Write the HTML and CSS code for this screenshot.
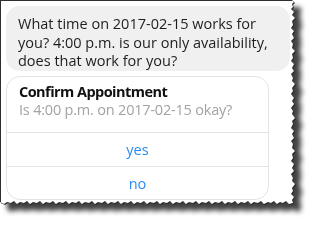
FILE: index.html
```html
<!DOCTYPE html>
<html>
<head>
<meta charset="utf-8">
<link rel="stylesheet" href="styles.css">
</head>
<body>
<div class="shot">
  <div class="frame">
    <div class="bubble">What time on 2017-02-15 works for you? 4:00 p.m. is our only availability, does that work for you?</div>
    <div class="card">
      <div class="card-head">
        <div class="title">Confirm Appointment</div>
        <div class="sub">Is 4:00 p.m. on 2017-02-15 okay?</div>
      </div>
      <div class="btn">yes</div>
      <div class="btn last">no</div>
    </div>
  </div>
</div>
</body>
</html>
```

FILE: styles.css
```css
html, body {
  margin: 0;
  padding: 0;
  background: #ffffff;
}
body {
  width: 312px;
  height: 220px;
  overflow: hidden;
  font-family: "Open Sans", "Noto Sans", sans-serif;
}
.shot {
  width: 296px;
  height: 205px;
  filter: drop-shadow(1px 1px 0 #2a2a2a) drop-shadow(7px 7px 2.5px rgba(0, 0, 0, 0.74));
}
.frame {
  box-sizing: border-box;
  width: 296px;
  height: 205px;
  background: #ffffff;
  border-top: 1px solid #2e2e2e;
  border-left: 1px solid #2e2e2e;
  padding: 5px 0 0 5px;
  clip-path: polygon(0 0, 292px 0, 294px 2px, 292px 4px, 293px 7px, 291px 9px, 294px 12px, 292px 15px, 295px 18px, 292px 21px, 293px 25px, 291px 28px, 294px 31px, 292px 34px, 294px 38px, 291px 41px, 293px 44px, 292px 48px, 295px 51px, 292px 54px, 293px 58px, 291px 61px, 294px 64px, 292px 68px, 294px 71px, 291px 74px, 293px 78px, 292px 81px, 295px 84px, 292px 88px, 293px 91px, 291px 94px, 294px 98px, 292px 101px, 294px 104px, 291px 108px, 293px 111px, 292px 114px, 295px 118px, 292px 121px, 293px 124px, 291px 128px, 294px 131px, 292px 134px, 294px 138px, 291px 141px, 293px 144px, 292px 148px, 295px 151px, 292px 154px, 293px 158px, 291px 161px, 294px 164px, 292px 168px, 294px 171px, 291px 174px, 293px 178px, 292px 181px, 295px 184px, 292px 188px, 293px 191px, 291px 194px, 294px 197px, 292px 200px, 293px 203px, 289px 204px, 286px 201px, 283px 203px, 280px 202px, 277px 204px, 274px 201px, 271px 203px, 268px 202px, 264px 204px, 261px 201px, 258px 203px, 254px 202px, 251px 204px, 248px 201px, 245px 203px, 241px 202px, 238px 204px, 235px 201px, 232px 203px, 228px 202px, 225px 204px, 222px 201px, 219px 203px, 215px 202px, 212px 204px, 209px 201px, 206px 203px, 202px 202px, 199px 204px, 196px 201px, 193px 203px, 189px 202px, 186px 204px, 183px 201px, 180px 203px, 176px 202px, 173px 204px, 170px 201px, 167px 203px, 163px 202px, 160px 204px, 157px 201px, 154px 203px, 150px 202px, 147px 204px, 144px 201px, 141px 203px, 137px 202px, 134px 204px, 131px 201px, 128px 203px, 124px 202px, 121px 204px, 118px 201px, 115px 203px, 111px 202px, 108px 204px, 105px 201px, 102px 203px, 98px 202px, 95px 204px, 92px 201px, 89px 203px, 85px 202px, 82px 204px, 79px 201px, 76px 203px, 72px 202px, 69px 204px, 66px 201px, 63px 203px, 59px 202px, 56px 204px, 53px 201px, 50px 203px, 46px 202px, 43px 204px, 40px 201px, 37px 203px, 33px 202px, 30px 204px, 27px 201px, 24px 203px, 20px 202px, 17px 204px, 14px 201px, 11px 203px, 7px 202px, 4px 204px, 0 202px);
}
.bubble {
  box-sizing: border-box;
  width: 284px;
  height: 65px;
  background: #f0f0f0;
  border-radius: 14px;
  padding: 9px 10px 0 12px;
  font-size: 14.5px;
  line-height: 18.5px;
  color: #1e1e1e;
}
.card {
  box-sizing: border-box;
  width: 263px;
  margin-top: 5px;
  border: 1px solid #e3e3e3;
  border-radius: 14px;
  overflow: hidden;
}
.card-head {
  height: 55px;
  box-sizing: border-box;
  padding: 6px 12px 0 12px;
}
.title {
  font-weight: 700;
  font-size: 14.5px;
  line-height: 18px;
  color: #111111;
  letter-spacing: -0.55px;
}
.sub {
  font-size: 14.5px;
  line-height: 17px;
  color: #a3a3a3;
  letter-spacing: -0.2px;
}
.btn {
  height: 33px;
  border-top: 1px solid #e3e3e3;
  display: flex;
  align-items: center;
  justify-content: center;
  font-size: 14.5px;
  color: #2b8bf4;
}
.btn.last {
  height: 32px;
}
```
